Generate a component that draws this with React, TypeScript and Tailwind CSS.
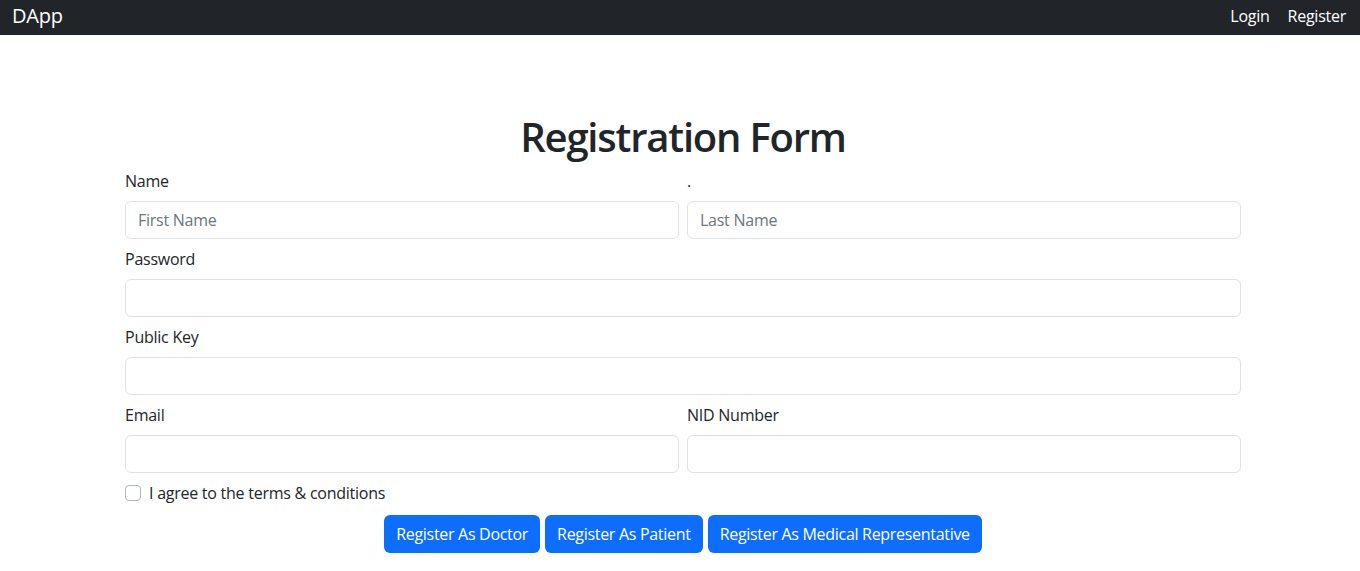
import React from 'react';

const inputCls =
  'block w-full h-[38px] px-3 rounded-md border border-[#dee2e6] bg-white text-base text-[#212529] placeholder:text-[#6c757d] outline-none';

const btnCls = 'h-[38px] px-3 rounded-md bg-[#0d6efd] text-white tracking-[-0.3px]';

const App: React.FC = () => {
  return (
    <div className="min-h-screen bg-white text-[#212529] tracking-[-0.25px] font-['Open_Sans','Noto_Sans',sans-serif]">
      {/* Navbar */}
      <nav className="bg-[#212529] h-[35px] flex items-center justify-between pl-3 pr-[14px] pb-[3px]">
        <a href="#" className="text-white text-xl leading-none">DApp</a>
        <div className="flex gap-[18px] text-white text-base">
          <a href="#">Login</a>
          <a href="#">Register</a>
        </div>
      </nav>

      <div className="ml-[125px] w-[1116px] pt-[78px]">
        <h1 className="text-[40px] leading-[1.2] font-semibold tracking-[-1.2px] text-center mb-[8px]">Registration Form</h1>

        <form className="text-base">
          <div className="grid grid-cols-2 gap-x-2">
            <div>
              <label className="block leading-6 mb-2">Name</label>
              <input type="text" placeholder="First Name" className={inputCls} />
            </div>
            <div>
              <label className="block leading-6 mb-2">.</label>
              <input type="text" placeholder="Last Name" className={inputCls} />
            </div>
          </div>

          <div className="mt-2">
            <label className="block leading-6 mb-2">Password</label>
            <input type="password" className={inputCls} />
          </div>

          <div className="mt-2">
            <label className="block leading-6 mb-2">Public Key</label>
            <input type="text" className={inputCls} />
          </div>

          <div className="grid grid-cols-2 gap-x-2 mt-2">
            <div>
              <label className="block leading-6 mb-2">Email</label>
              <input type="email" className={inputCls} />
            </div>
            <div>
              <label className="block leading-6 mb-2">NID Number</label>
              <input type="text" className={inputCls} />
            </div>
          </div>

          <div className="flex items-center gap-2 mt-2 leading-6">
            <input type="checkbox" className="appearance-none w-4 h-4 rounded border border-[#adb5bd] bg-white" />
            <label>I agree to the terms &amp; conditions</label>
          </div>

          <div className="flex justify-center gap-[5px] mt-[10px]">
            <button type="button" className={btnCls}>Register As Doctor</button>
            <button type="button" className={btnCls}>Register As Patient</button>
            <button type="button" className={btnCls}>Register As Medical Representative</button>
          </div>
        </form>
      </div>
    </div>
  );
};

export default App;
